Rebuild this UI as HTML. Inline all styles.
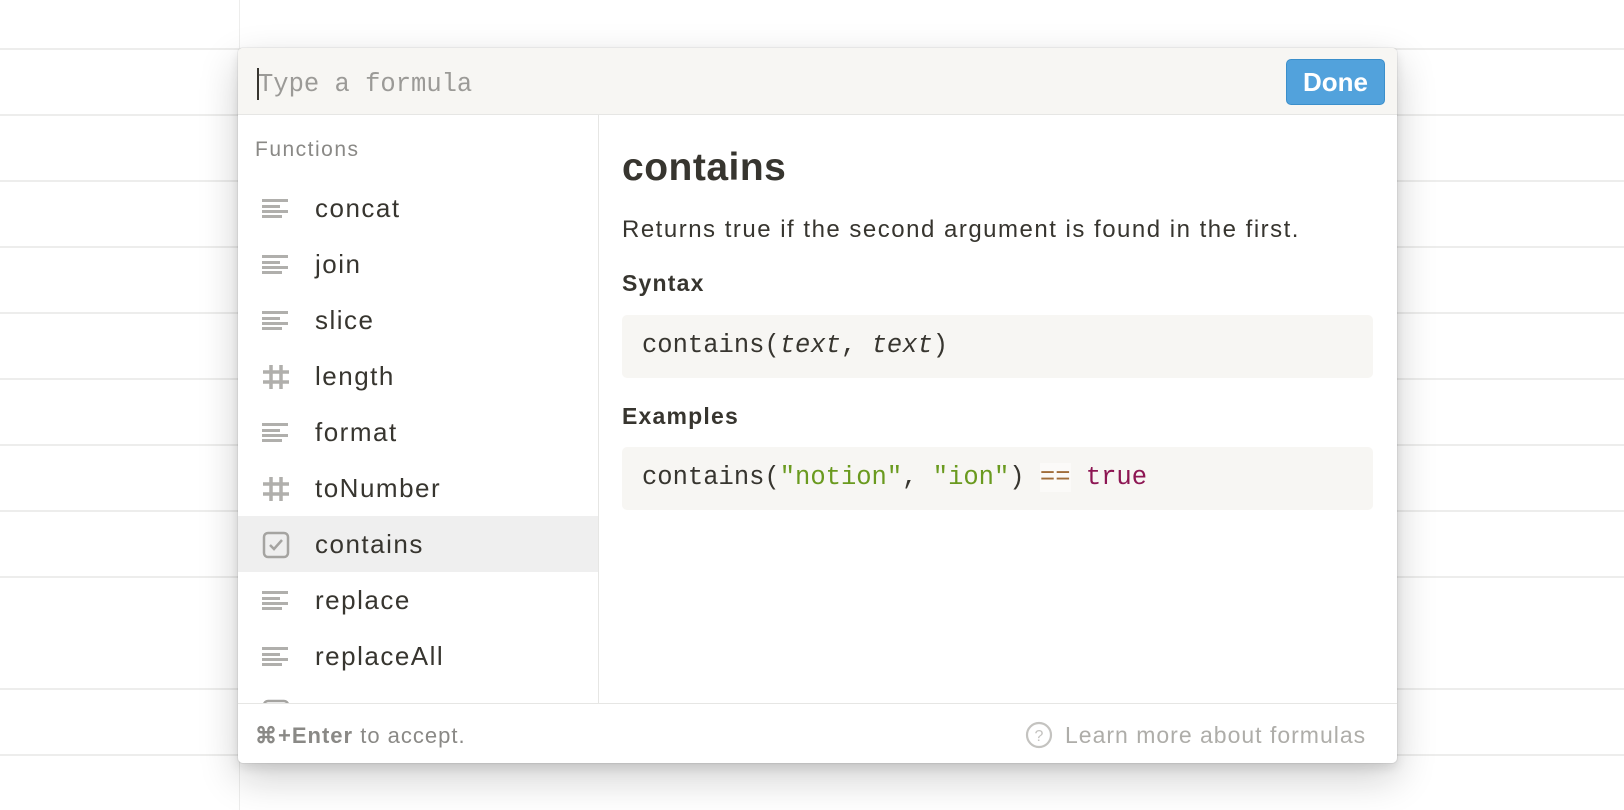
<!DOCTYPE html>
<html><head><meta charset="utf-8"><style>
*{box-sizing:border-box;margin:0;padding:0}
body{width:1624px;height:810px;background:#fff;position:relative;overflow:hidden;font-family:"Liberation Sans",sans-serif;color:#37352f}
.hl{position:absolute;left:0;right:0;height:2px;background:#ededec}
.vl{position:absolute;left:239px;top:0;bottom:0;width:1px;background:#ededec}
.pop{position:absolute;left:238px;top:48px;width:1159px;height:715px;background:#fff;border-radius:5px;box-shadow:0 0 0 1px rgba(15,15,15,.05),0 5px 10px rgba(15,15,15,.1),0 15px 40px rgba(15,15,15,.2);overflow:hidden}
.top{position:absolute;left:0;top:0;right:0;height:67px;background:#f7f6f3;border-bottom:1px solid #e6e6e4}
.ph{position:absolute;left:20px;top:22px;font-family:"Liberation Mono",monospace;font-size:25.5px;color:#9b9a97}
.caret{position:absolute;left:19px;top:20px;width:2px;height:32px;background:#37352f}
.done{position:absolute;left:1048px;top:11px;width:99px;height:46px;background:#52a2dc;border:1px solid #3b8fcb;border-radius:5px;color:#fff;font-size:26px;font-weight:bold;text-align:center;line-height:44px}
.left{position:absolute;left:0;top:67px;width:361px;height:589px;border-right:1px solid #e6e6e4;overflow:hidden}
.lab{position:absolute;left:17px;top:23px;font-size:21px;letter-spacing:1.5px;color:#8a8986}
.row{position:absolute;left:0;width:361px;height:56px;font-size:26px;letter-spacing:1.5px;color:#37352f}
.row span{position:absolute;left:77px;top:13px}
.row svg{position:absolute;left:24px;top:15px}
.sel{background:#efefef}
.foot{position:absolute;left:0;right:0;top:655px;height:60px;border-top:1px solid #e6e6e4}
.right{position:absolute;left:384px;top:67px}
h1{position:absolute;left:0;top:31px;font-size:39px;letter-spacing:0.5px;white-space:nowrap;font-weight:bold}
.sub{position:absolute;left:0;font-size:23px;letter-spacing:1.2px;font-weight:bold}
.code{position:absolute;width:751px;height:63px;background:#f7f6f3;border-radius:5px;font-family:"Liberation Mono",monospace;font-size:25.5px;padding:16px 20px;white-space:nowrap}
</style></head><body>
<div class="vl"></div>
<div class="hl" style="top:48px"></div><div class="hl" style="top:114px"></div><div class="hl" style="top:180px"></div><div class="hl" style="top:246px"></div><div class="hl" style="top:312px"></div><div class="hl" style="top:378px"></div><div class="hl" style="top:444px"></div><div class="hl" style="top:510px"></div><div class="hl" style="top:576px"></div><div class="hl" style="top:688px"></div><div class="hl" style="top:754px"></div>
<div class="pop">
<div class="top"><div class="caret"></div><div class="ph">Type a formula</div><div class="done">Done</div></div>
<div class="left">
<div class="lab">Functions</div>
<div class="row" style="top:65px"><svg width="26" height="26"><g fill="#b0afac"><rect x="0" y="4" width="26" height="3"/><rect x="0" y="10" width="18" height="3"/><rect x="0" y="15" width="26" height="3"/><rect x="0" y="20" width="20" height="3"/></g></svg><span>concat</span></div>
<div class="row" style="top:121px"><svg width="26" height="26"><g fill="#b0afac"><rect x="0" y="4" width="26" height="3"/><rect x="0" y="10" width="18" height="3"/><rect x="0" y="15" width="26" height="3"/><rect x="0" y="20" width="20" height="3"/></g></svg><span>join</span></div>
<div class="row" style="top:177px"><svg width="26" height="26"><g fill="#b0afac"><rect x="0" y="4" width="26" height="3"/><rect x="0" y="10" width="18" height="3"/><rect x="0" y="15" width="26" height="3"/><rect x="0" y="20" width="20" height="3"/></g></svg><span>slice</span></div>
<div class="row" style="top:233px"><svg width="28" height="28"><path d="M9 2V26M19 2V26M1 9H27M1 19H27" stroke="#b0afac" stroke-width="3.5"/></svg><span>length</span></div>
<div class="row" style="top:289px"><svg width="26" height="26"><g fill="#b0afac"><rect x="0" y="4" width="26" height="3"/><rect x="0" y="10" width="18" height="3"/><rect x="0" y="15" width="26" height="3"/><rect x="0" y="20" width="20" height="3"/></g></svg><span>format</span></div>
<div class="row" style="top:345px"><svg width="28" height="28"><path d="M9 2V26M19 2V26M1 9H27M1 19H27" stroke="#b0afac" stroke-width="3.5"/></svg><span>toNumber</span></div>
<div class="row sel" style="top:401px"><svg width="28" height="28"><rect x="2" y="2" width="24" height="24" rx="4" fill="none" stroke="#a5a4a1" stroke-width="2.5"/><path d="M8 14l4 4 8-9" fill="none" stroke="#a5a4a1" stroke-width="2.5"/></svg><span>contains</span></div>
<div class="row" style="top:457px"><svg width="26" height="26"><g fill="#b0afac"><rect x="0" y="4" width="26" height="3"/><rect x="0" y="10" width="18" height="3"/><rect x="0" y="15" width="26" height="3"/><rect x="0" y="20" width="20" height="3"/></g></svg><span>replace</span></div>
<div class="row" style="top:513px"><svg width="26" height="26"><g fill="#b0afac"><rect x="0" y="4" width="26" height="3"/><rect x="0" y="10" width="18" height="3"/><rect x="0" y="15" width="26" height="3"/><rect x="0" y="20" width="20" height="3"/></g></svg><span>replaceAll</span></div>
<div class="row" style="top:569px"><svg width="28" height="28"><rect x="2" y="2" width="24" height="24" rx="4" fill="none" stroke="#a5a4a1" stroke-width="2.5"/></svg></div>
</div>
<div class="right">
<h1>contains</h1>
<div style="position:absolute;left:0;top:101px;font-size:24px;letter-spacing:1.5px;white-space:nowrap">Returns true if the second argument is found in the first.</div>
<div class="sub" style="top:155px">Syntax</div>
<div class="code" style="left:0;top:200px">contains(<i>text</i>, <i>text</i>)</div>
<div class="sub" style="top:288px">Examples</div>
<div class="code" style="left:0;top:332px">contains(<span style="color:#6a9a1f">"notion"</span>, <span style="color:#6a9a1f">"ion"</span>) <span style="color:#a06d3a;background:#fbfaf8">==</span> <span style="color:#8d1653">true</span></div>
</div>
<div class="foot">
<div style="position:absolute;left:17px;top:19px;font-size:22px;letter-spacing:1px;color:#8a8986"><b>⌘+Enter</b> to accept.</div>
<svg style="position:absolute;left:787px;top:17px" width="28" height="28"><circle cx="14" cy="14" r="12" fill="none" stroke="#c4c3c0" stroke-width="2.2"/><text x="14" y="20" font-size="16" text-anchor="middle" fill="#c4c3c0" font-family="Liberation Sans">?</text></svg>
<div style="position:absolute;left:827px;top:18px;font-size:23px;letter-spacing:1px;color:#aeada9;white-space:nowrap">Learn more about formulas</div>
</div>
</div>
</body></html>
